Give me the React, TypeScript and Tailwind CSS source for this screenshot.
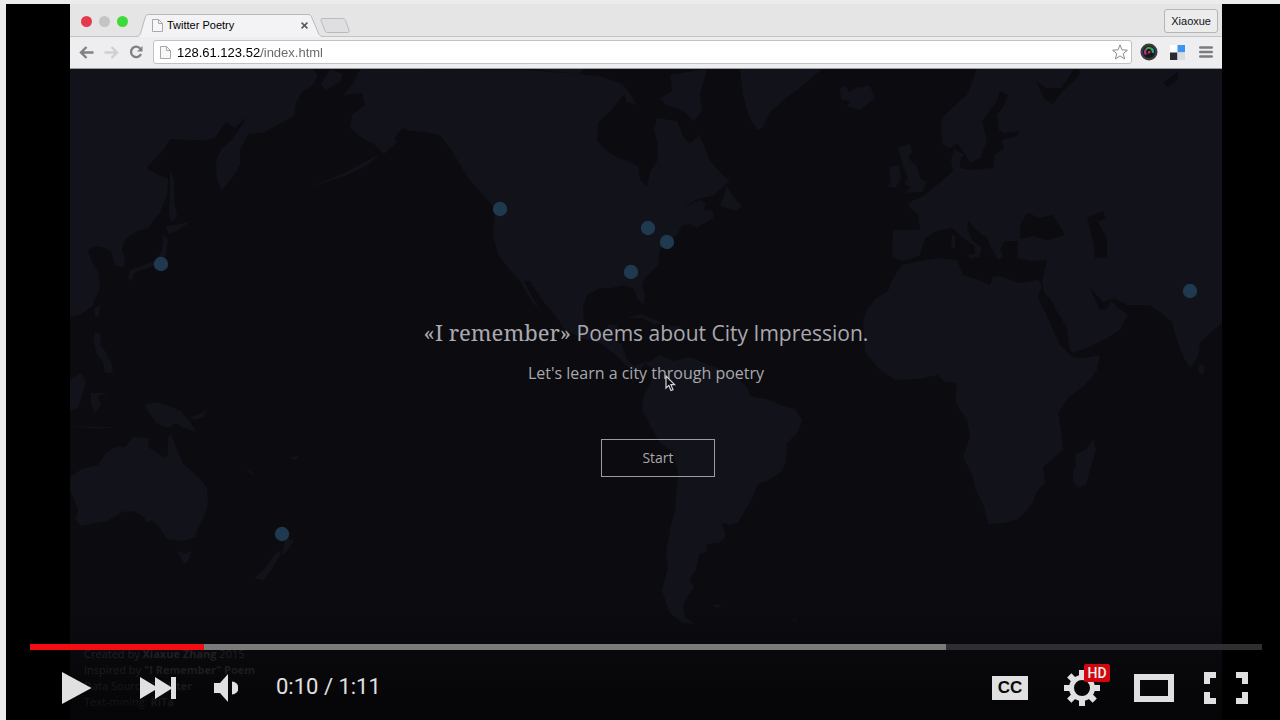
import React from "react";

const cities = [
  { name: "Tokyo", x: 161, y: 264 },
  { name: "Seattle", x: 500, y: 209 },
  { name: "Detroit", x: 648, y: 228 },
  { name: "New York", x: 667, y: 242 },
  { name: "Atlanta", x: 631, y: 272 },
  { name: "Delhi", x: 1190, y: 291 },
  { name: "Auckland", x: 282, y: 534 },
];

const land = [
  // East Asia and Kamchatka
  "M70 69H313L318 76L312 86L302 92L296 103L294 116L285 121L272 128L262 133L248 134L240 150L240 165L232 178L222 190L217 180L216 160L222 148L232 140L240 128L247 117L235 128L226 122L215 138L205 140L190 140L170 139L165 148L152 162L146 168L160 176L168 178L167 195L160 212L148 228L135 232L125 240L122 248L125 260L123 268L115 265L111 252L105 248L95 246L88 250L92 262L98 272L100 288L92 306L80 315L70 317Z",
  // Sakhalin and Japan
  "M170 171L174 180L174 200L177 216L172 222L169 214L170 190Z",
  "M166 226L176 225L191 221L179 230L168 234Z",
  "M163 234L168 240L166 256L158 264L148 268L134 273L132 281L128 278L130 270L144 265L156 260L162 250Z",
  "M95 308L100 305L99 316L95 318Z M95 332L101 334L100 347L93 342Z",
  // North and Central America
  "M360 69L523 70L567 73L600 76L622 84L626 92L612 109L598 123L597 140L604 149L613 155L638 166L640 180L647 186L650 172L657 161L658 145L654 130L657 118L677 121L684 138L690 144L699 135L704 145L710 161L722 174L730 181L713 196L697 199L683 208L699 200L706 203L704 210L713 211L713 218L697 228L690 224L682 226L676 236L666 243L660 250L658 265L645 278L642 285L645 296L643 305L637 298L634 289L625 285L612 288L600 288L587 295L583 308L584 321L592 333L604 332L609 324L618 326L611 337L622 345L627 360L634 366L647 361L640 370L632 371L618 357L600 343L584 339L565 330L557 318L543 301L530 281L524 281L533 298L542 313L532 302L520 281L510 270L498 255L493 235L495 208L483 195L468 178L452 151L440 135L424 132L410 131L402 128L394 139L397 142L384 154L375 145L362 138L350 128L352 115L365 105L362 93L343 95L352 85Z",
  "M380 154L366 166L345 176L307 188L344 173L363 163Z",
  // Arctic islands
  "M330 69L343 74L340 82L326 90L321 84Z M670 75L707 69L700 95L702 111L694 121L682 110L667 105L660 99L672 91Z M622 84L629 92L637 105L626 102Z M535 69L585 69L578 74Z",
  "M740 69H822L806 83L785 99L770 112L763 127L757 130L749 117L743 95Z",
  "M727 186L733 196L742 206L736 211L720 206Z",
  // Caribbean
  "M626 318L641 314L663 323L655 325L642 318Z M669 326L680 326L685 331L669 331Z",
  // South America
  "M645 364L660 355L674 361L690 357L704 363L723 370L735 376L747 387L750 396L766 399L780 405L795 409L802 420L798 432L787 443L786 462L780 473L769 480L757 485L753 497L747 507L738 523L730 525L722 523L726 536L719 543L707 544L706 552L699 554L696 570L690 579L694 588L687 597L683 607L685 617L695 624L683 623L670 614L662 590L668 568L666 553L670 530L675 510L678 473L673 452L660 443L651 427L642 410L644 394L652 380L653 368Z",
  "M711 605L722 604L718 608Z M792 619L798 620L795 622Z",
  // Iceland and the British Isles
  "M840 88L846 86L849 92L858 87L870 86L875 98L860 110L847 106L850 101L841 99Z",
  "M898 147L910 144L912 152L908 158L917 167L920 179L927 182L922 192L905 193L911 187L904 184L908 177L904 169L901 158Z M889 167L899 165L901 178L896 187L888 187L891 180Z",
  // Eurasia
  "M977 69L967 95L954 106L942 118L941 132L943 145L950 148L957 143L963 151L970 163L980 158L987 141L982 121L997 101L1000 91L1008 95L1003 107L997 115L999 130L1004 133L1020 131L1017 136L1002 140L1004 149L995 154L993 168L970 170L960 168L961 157L965 155L954 149L951 160L953 171L937 185L925 195L908 203L910 208L918 215L920 230L893 230L892 256L902 261L911 259L920 255L925 238L937 231L952 228L963 238L974 246L975 253L969 257L979 257L982 248L972 240L967 228L968 220L976 230L987 238L991 248L998 260L1004 257L1000 249L1005 241L1018 241L1017 258L1030 261L1047 260L1042 281L1045 300L1056 315L1060 331L1072 353L1087 348L1107 338L1120 330L1128 315L1117 307L1111 301L1107 309L1100 310L1090 288L1103 302L1114 298L1127 305L1150 305L1161 313L1172 322L1177 340L1184 358L1190 368L1198 357L1200 343L1210 333L1222 323V69Z",
  "M952 235L955 235L955 248L951 248Z M966 255L976 254L973 260Z",
  // Africa and Madagascar
  "M902 265L920 261L937 258L957 260L963 275L976 279L990 285L993 277L1000 276L1020 283L1038 280L1042 285L1038 297L1050 323L1060 345L1073 357L1086 358L1100 355L1097 370L1087 383L1068 398L1058 413L1061 430L1063 450L1053 459L1043 467L1045 483L1037 491L1033 502L1027 510L1018 519L1004 523L988 524L984 507L975 488L973 477L963 457L970 437L967 420L955 402L957 383L945 382L938 375L918 379L895 380L880 370L865 352L863 320L867 310L875 299L888 291L892 280Z",
  "M1093 439L1096 450L1090 470L1086 484L1079 488L1073 482L1073 471L1076 465L1075 455L1086 449Z",
  "M1199 363L1205 367L1203 375L1198 372Z",
  // Australia, New Guinea, New Zealand and neighbours
  "M71 476L82 469L98 465L106 453L117 446L125 447L134 437L149 438L148 447L163 457L168 456L168 438L171 434L176 447L183 464L194 473L207 487L208 502L206 512L197 531L195 537L183 541L167 539L159 527L152 520L148 523L142 515L132 511L122 512L107 521L90 524L81 526L76 520L78 510L70 490Z",
  "M177 551L185 553L192 551L188 561L184 564Z",
  "M144 405L155 402L167 405L181 411L189 421L197 432L184 428L175 423L168 428L156 423Z M190 417L200 414L208 409L203 417L194 420Z",
  "M285 536L294 541L287 551L281 556L284 546Z M277 551L281 553L273 567L264 580L254 578L264 570Z",
  "M70 380L81 373L86 382L82 396L78 408L70 410Z M91 393L109 393L98 396L101 404L95 413L91 404Z M70 426L116 427L96 429Z M94 340L104 349L111 362L113 373L105 373L103 362L96 353Z M246 468L255 475L249 473Z M290 457L299 456L294 461Z",
];

const waters = [
  "M1020 225L1027 213L1040 218L1053 215L1065 235L1048 240L1033 236L1020 239Z",
  "M1087 218L1103 211L1106 218L1098 222L1107 238L1107 257L1095 258L1094 245Z",
  "M1036 81L1046 88L1061 88L1068 78L1074 69L1081 71L1076 79L1063 91L1057 98L1053 105L1044 98Z",
  "M1163 83L1171 77L1179 71L1177 81L1168 87Z",
  "M1042 291L1050 298L1058 313L1067 328L1070 352L1061 340L1053 320Z",
];

function WorldMap() {
  return (
    <svg
      className="absolute inset-0 h-full w-full"
      viewBox="70 69 1152 651"
      preserveAspectRatio="xMidYMid slice"
      aria-hidden="true"
    >
      <g fill="#12121a">
        {land.map((d) => (
          <path key={d} d={d} />
        ))}
      </g>
      <g fill="#0c0b10">
        {waters.map((d) => (
          <path key={d} d={d} />
        ))}
      </g>
      <g fill="#1f394f">
        {cities.map((c) => (
          <circle key={c.name} cx={c.x} cy={c.y} r="7.2" />
        ))}
      </g>
    </svg>
  );
}

function FileIcon({ className }: { className: string }) {
  return (
    <svg className={className} viewBox="0 0 11 13" fill="#f7f7f7" stroke="#a9a9ab" aria-hidden="true">
      <path d="M.5.5H6.5L10.5 4.5V12.5H.5Z" />
      <path d="M6.5.5V4.5H10.5" fill="none" />
    </svg>
  );
}

function TabStrip() {
  return (
    <div className="flex h-[33px] items-center border-b border-[#c3c3c5] bg-[#e6e5e6] pr-1 pl-[11px]">
      <div className="flex gap-[7px] pt-0.5">
        <button type="button" aria-label="Close window" className="size-[11px] rounded-full bg-[#e33b4b]" />
        <button type="button" aria-label="Minimize window" className="size-[11px] rounded-full bg-[#c4c4c4]" />
        <button type="button" aria-label="Zoom window" className="size-[11px] rounded-full bg-[#3ddb38]" />
      </div>
      <div className="relative ml-2 flex h-[33px] w-[190px] items-center gap-1 pt-2.5 pr-[18px] pl-4">
        <svg className="absolute inset-0 h-full w-full" viewBox="0 0 190 33" aria-hidden="true">
          <path
            d="M0 32.5C3 32.5 4 31 5 28L9 14C10 11 11 10.500 13 10.500H171C174 10.500 175 11 176 14L182 28C183 31 184 32.500 188 32.500V33H0Z"
            fill="#f3f2f4"
          />
          <path
            d="M0 32.5C3 32.5 4 31 5 28L9 14C10 11 11 10.500 13 10.500H171C174 10.500 175 11 176 14L182 28C183 31 184 32.500 188 32.500"
            fill="none"
            stroke="#b9b9bb"
          />
        </svg>
        <FileIcon className="relative h-[13px] w-[11px]" />
        <span className="relative flex-1 text-[11px] leading-4 text-black">Twitter Poetry</span>
        <button type="button" aria-label="Close tab" className="relative">
          <svg className="size-[7px]" viewBox="0 0 7 7" stroke="#5c5c5e" strokeWidth="1.6" aria-hidden="true">
            <path d="M.6.6L6.400 6.400M6.400.6L.6 6.400" />
          </svg>
        </button>
      </div>
      <button type="button" aria-label="New tab" className="-ml-1.5 pt-2.5">
        <svg className="h-[15px] w-[30px]" viewBox="0 0 30 15" fill="#dfdee0" stroke="#b9b9bb" aria-hidden="true">
          <path d="M2.500.5H22C24 .5 25 1 25.500 2.500L29 12C29.500 13.500 29 14.500 27.500 14.500H7.500C6 14.500 5.500 14 5 12.500L1 2.500C.6 1 1 .5 2.500 .5Z" />
        </svg>
      </button>
      <button
        type="button"
        className="mt-0.5 ml-auto h-6 rounded-[3px] border border-[#b5b5b7] bg-[#ececed] px-1.5 text-[11px] text-[#111]"
      >
        Xiaoxue
      </button>
    </div>
  );
}

function Toolbar() {
  return (
    <div className="flex h-8 items-center border-b border-[#9b9ea3] bg-[#eeedf0] pr-[9px] pb-px pl-[9px]">
      <button type="button" aria-label="Back">
        <svg className="h-[13px] w-[15px]" viewBox="0 0 15 13" fill="none" stroke="#818183" strokeWidth="2.400" aria-hidden="true">
          <path d="M14.500 6.500H2M7.500 1L2 6.500L7.500 12" />
        </svg>
      </button>
      <button type="button" aria-label="Forward" className="ml-2.5">
        <svg className="h-[13px] w-[15px]" viewBox="0 0 15 13" fill="none" stroke="#d0d0d2" strokeWidth="2.400" aria-hidden="true">
          <path d="M.5 6.500H13M7.500 1L13 6.500L7.500 12" />
        </svg>
      </button>
      <button type="button" aria-label="Reload" className="ml-2.5">
        <svg className="size-[14px]" viewBox="0 0 14 14" aria-hidden="true">
          <path d="M11.300 3.600A5.200 5.200 0 1 0 12 9" fill="none" stroke="#818183" strokeWidth="2.300" />
          <path d="M13.500 1V6.500H8Z" fill="#818183" />
        </svg>
      </button>
      <div className="ml-2.5 flex h-6 flex-1 items-center rounded-[3px] border border-[#c2c2c5] bg-white pr-[3px] pl-1.5">
        <FileIcon className="h-[13px] w-[11px]" />
        <input
          type="text"
          aria-label="Address"
          defaultValue="128.61.123.52/index.html"
          className="ml-1.5 h-5 min-w-0 flex-1 bg-[linear-gradient(90deg,#000_84px,#666_84px)] bg-clip-text text-[13px] text-transparent caret-black outline-none"
        />
        <button type="button" aria-label="Bookmark">
          <svg className="size-4" viewBox="0 0 16 16" fill="#fff" stroke="#8b8b8e" strokeLinejoin="round" aria-hidden="true">
            <path d="M8 .8L10 5.900L15.400 6.200L11.200 9.600L12.600 14.900L8 11.900L3.400 14.900L4.800 9.600L.6 6.200L6 5.900Z" />
          </svg>
        </button>
      </div>
      <button type="button" aria-label="Camera extension" className="ml-2">
        <svg className="size-[18px]" viewBox="0 0 18 18" aria-hidden="true">
          <circle cx="9" cy="9" r="8.500" fill="#3b3b3d" />
          <circle cx="9" cy="9" r="6" fill="#19191b" />
          <g fill="none" strokeWidth="2">
            <path d="M6 11.500A3.800 3.800 0 0 1 6 6.500" stroke="#a136a8" />
            <path d="M6 6.500A3.800 3.800 0 0 1 11 5.500" stroke="#46a63a" />
            <path d="M11 5.500A3.800 3.800 0 0 1 12.800 10" stroke="#1fa897" />
            <path d="M8.500 10.500A2.200 2.200 0 0 1 10.500 8.500" stroke="#c33d2c" />
          </g>
        </svg>
      </button>
      <button type="button" aria-label="Save extension" className="ml-3">
        <svg className="size-[15px]" viewBox="0 0 15 15" aria-hidden="true">
          <path d="M0 0H15V15H0Z" fill="#fff" />
          <path d="M7.500 0H15V7.500H7.500Z" fill="#3c96f0" />
          <path d="M0 7.500H7.500V15H0Z" fill="#2b2b30" />
          <path d="M7.500 7.500H15V15H7.500Z" fill="#dcdce0" />
        </svg>
      </button>
      <button type="button" aria-label="Menu" className="ml-3.5">
        <svg className="h-3 w-[14px]" viewBox="0 0 14 12" fill="none" stroke="#7c7c7e" strokeWidth="2.600" strokeLinecap="round" aria-hidden="true">
          <path d="M1.300 1.500H12.700M1.300 6H12.700M1.300 10.500H12.700" />
        </svg>
      </button>
    </div>
  );
}

function Cursor() {
  return (
    <svg className="absolute top-[18px] left-[137px] h-[17px] w-[11px]" viewBox="0 0 11 17" aria-hidden="true">
      <path
        d="M1 1V13L3.800 10.400L6 15.500L8 14.600L5.900 9.700H9.600Z"
        fill="#0c0b10"
        stroke="#d6d5da"
        strokeWidth="1.200"
      />
    </svg>
  );
}

function PoetryPage() {
  return (
    <div className="relative flex flex-1 flex-col overflow-hidden bg-[#0c0b10]">
      <WorldMap />
      <div className="relative flex flex-col items-center pt-[247px] font-['Open_Sans',sans-serif] text-[#a9a8ad]">
        <h1 className="text-[21px] leading-8 font-normal">
          <span className="font-['Noto_Serif','DejaVu_Serif',serif] text-[22px]">«I remember»</span> Poems about City
          Impression.
        </h1>
        <p className="relative mt-2 text-base leading-8">
          Let's learn a city through poetry
          <Cursor />
        </p>
        <div className="mt-[50px] pl-6">
          <button type="button" className="h-[38px] w-[114px] border border-[#9c9ba2] text-sm">
            Start
          </button>
        </div>
      </div>
      <footer className="relative mt-auto pb-2.5 pl-3.5 font-['Open_Sans',sans-serif] text-[11px] leading-4 text-[#2b2b2f]">
        <p>
          Created by <b>Xiaxue Zhang</b> 2015
        </p>
        <p>
          Inspired by <b>"I Remember" Poem</b>
        </p>
        <p>
          Data Source: <b>Twitter</b>
        </p>
        <p>
          Text-mining: <b>RiTa</b>
        </p>
      </footer>
    </div>
  );
}

const duration = 71;
const elapsed = 10;
const buffered = 52.8;

function trackFill() {
  const played = (elapsed / duration) * 100;
  const loaded = (buffered / duration) * 100;
  return `linear-gradient(90deg, #f10d12 ${played}%, #7a7a7b ${played}%, #7a7a7b ${loaded}%, #2f2f32 ${loaded}%)`;
}

const teeth = [0, 45, 90, 135, 180, 225, 270, 315];

function PlayerControls() {
  return (
    <div className="absolute inset-x-0 bottom-0 flex flex-col bg-linear-to-b from-transparent to-black/60 pt-10 pr-[18px] pl-6">
      <input
        type="range"
        aria-label="Seek"
        min={0}
        max={duration}
        defaultValue={elapsed}
        style={{ backgroundImage: trackFill() }}
        className="block h-1.5 w-full appearance-none [&::-webkit-slider-thumb]:size-0 [&::-webkit-slider-thumb]:appearance-none"
      />
      <div className="flex h-[70px] items-center justify-between pt-1.5 text-[#e0e0e0]">
        <div className="flex items-center gap-[38px] pl-8">
          <button type="button" aria-label="Play">
            <svg className="h-8 w-10" viewBox="0 0 40 32" fill="currentColor" aria-hidden="true">
              <path d="M0 0L29.500 16L0 32Z" />
            </svg>
          </button>
          <button type="button" aria-label="Next">
            <svg className="h-[22px] w-9" viewBox="0 0 36 22" fill="currentColor" aria-hidden="true">
              <path d="M0 0L15 9V0L31 10V0H36V22H31V12L15 22V13L0 22Z" />
            </svg>
          </button>
          <button type="button" aria-label="Mute">
            <svg className="h-[30px] w-6" viewBox="0 0 24 30" fill="currentColor" aria-hidden="true">
              <path d="M0 10H6L14 1V29L6 20H0Z" />
              <path d="M18 8.500A6.500 6.500 0 0 1 18 21.500Z" />
            </svg>
          </button>
          <span className="pb-0.5 font-['Roboto',sans-serif] text-[22px] leading-7">0:10 / 1:11</span>
        </div>
        <div className="flex items-center">
          <button type="button" aria-label="Subtitles" className="flex w-[72px] justify-center">
            <span className="flex h-6 w-9 items-center justify-center bg-[#e0e0e0] font-['Liberation_Sans',sans-serif] text-[17px] font-bold text-[#0a0a0c]">
              CC
            </span>
          </button>
          <button type="button" aria-label="Settings" className="relative flex w-[72px] justify-center">
            <svg className="size-9" viewBox="-18 -18 36 36" aria-hidden="true">
              <circle r="10.500" fill="none" stroke="currentColor" strokeWidth="5" />
              {teeth.map((angle) => (
                <path key={angle} d="M-3 -12V-18H3V-12Z" fill="currentColor" transform={`rotate(${angle})`} />
              ))}
            </svg>
            <span className="absolute -top-1.5 left-[38px] flex h-[18px] w-[26px] items-center justify-center rounded-[2px] bg-[#d1070f] font-['Roboto',sans-serif] text-sm font-medium text-[#eee]">
              HD
            </span>
          </button>
          <button type="button" aria-label="Theater mode" className="flex w-[72px] justify-center">
            <svg className="h-7 w-10" viewBox="0 0 40 28" fill="none" stroke="currentColor" strokeWidth="6" aria-hidden="true">
              <path d="M3 3H37V25H3Z" />
            </svg>
          </button>
          <button type="button" aria-label="Full screen" className="flex w-[72px] justify-center">
            <svg className="h-8 w-11" viewBox="0 0 44 32" fill="none" stroke="currentColor" strokeWidth="6" aria-hidden="true">
              <path d="M3 12V3H12M32 3H41V12M41 20V29H32M12 29H3V20" />
            </svg>
          </button>
        </div>
      </div>
    </div>
  );
}

export default function App() {
  return (
    <main className="flex min-h-screen flex-col bg-[#ececec] pt-1 pl-1.5 font-['Liberation_Sans',Arial,sans-serif]">
      <section aria-label="Video player" className="relative flex flex-1 flex-col bg-black pr-[58px] pl-16">
        <TabStrip />
        <Toolbar />
        <PoetryPage />
        <PlayerControls />
      </section>
    </main>
  );
}
